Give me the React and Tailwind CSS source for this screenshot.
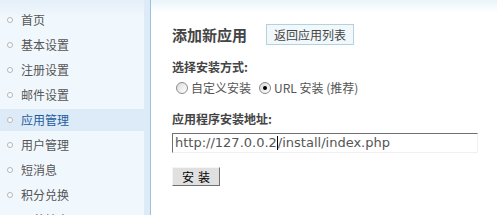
import React from 'react';

const menu = ['首页', '基本设置', '注册设置', '邮件设置', '应用管理', '用户管理', '短消息', '积分兑换', '运营站点'];

const font = { fontFamily: '"Noto Sans CJK SC", "Liberation Sans", sans-serif' };

function Radio({ checked }) {
    return (
        <span className="inline-flex w-[12px] h-[12px] rounded-full border border-[#8a8a8a] bg-gradient-to-br from-[#dcdcdc] to-white items-center justify-center mr-[3px]">
            {checked && <span className="w-[4px] h-[4px] rounded-full bg-black" />}
        </span>
    );
}

export default function App() {
    return (
        <div className="flex w-[497px] h-[215px] overflow-hidden bg-white" style={font}>
            <div className="flex w-[151px] shrink-0 bg-gradient-to-b from-[#e4eff8] via-[#f1f8fd] via-[8%] to-[#f1f8fd]">
                <ul className="w-[144px] pt-[9px]">
                    {menu.map((m, i) => (
                        <li
                            key={m}
                            className={
                                'flex items-center h-[22px] mb-[3px] pl-[7px] text-[12px] ' +
                                (i === 4 ? 'bg-[#dcebf7] text-[#1f5b9e]' : 'text-[#555]')
                            }
                        >
                            <span className="w-[6px] h-[6px] rounded-full border border-[#b5b5b5] bg-white mr-[8px]" />
                            {m}
                        </li>
                    ))}
                </ul>
                <div className="w-[6px] bg-[#dcebf7]" />
                <div className="w-[1px] bg-[#9cc3d3]" />
            </div>
            <div className="flex-1 bg-gradient-to-b from-[#eaf4fa] to-white to-[6%] pl-[21px] pt-[24px]">
                <div className="flex items-center h-[21px]">
                    <h1 className="text-[15px] font-bold text-[#444] w-[94px] leading-none">添加新应用</h1>
                    <button className="h-[21px] w-[88px] border border-[#b3d2dd] bg-[#f1f8fb] text-[12px] text-[#444] leading-none">
                        返回应用列表
                    </button>
                </div>
                <div className="mt-[17px] text-[12px] font-bold text-[#444] leading-[10px]">选择安装方式:</div>
                <div className="flex items-center mt-[9px] h-[13px] text-[12px] text-[#555] pl-[4px]">
                    <Radio />
                    <span className="mr-[8px]">自定义安装</span>
                    <Radio checked />
                    <span>URL 安装 (推荐)</span>
                </div>
                <div className="mt-[20px] text-[12px] font-bold text-[#444] leading-[10px]">应用程序安装地址:</div>
                <div className="flex items-center mt-[9px] w-[306px] h-[20px] border border-[#f0f0f0] border-t-[#707070] border-l-[#707070] pl-[2px] text-[13px] text-[#555]" style={{ fontFamily: '"DejaVu Sans", sans-serif' }}>
                    http://127.0.0.2<span className="inline-block w-[1px] h-[14px] bg-black" />/install/index.php
                </div>
                <button className="mt-[14px] w-[48px] h-[19px] bg-[#e0e0e0] border border-[#f5f5f5] border-r-[#707070] border-b-[#707070] text-[12px] text-black leading-none tracking-[4px] pl-[4px]">
                    安装
                </button>
            </div>
        </div>
    );
}
